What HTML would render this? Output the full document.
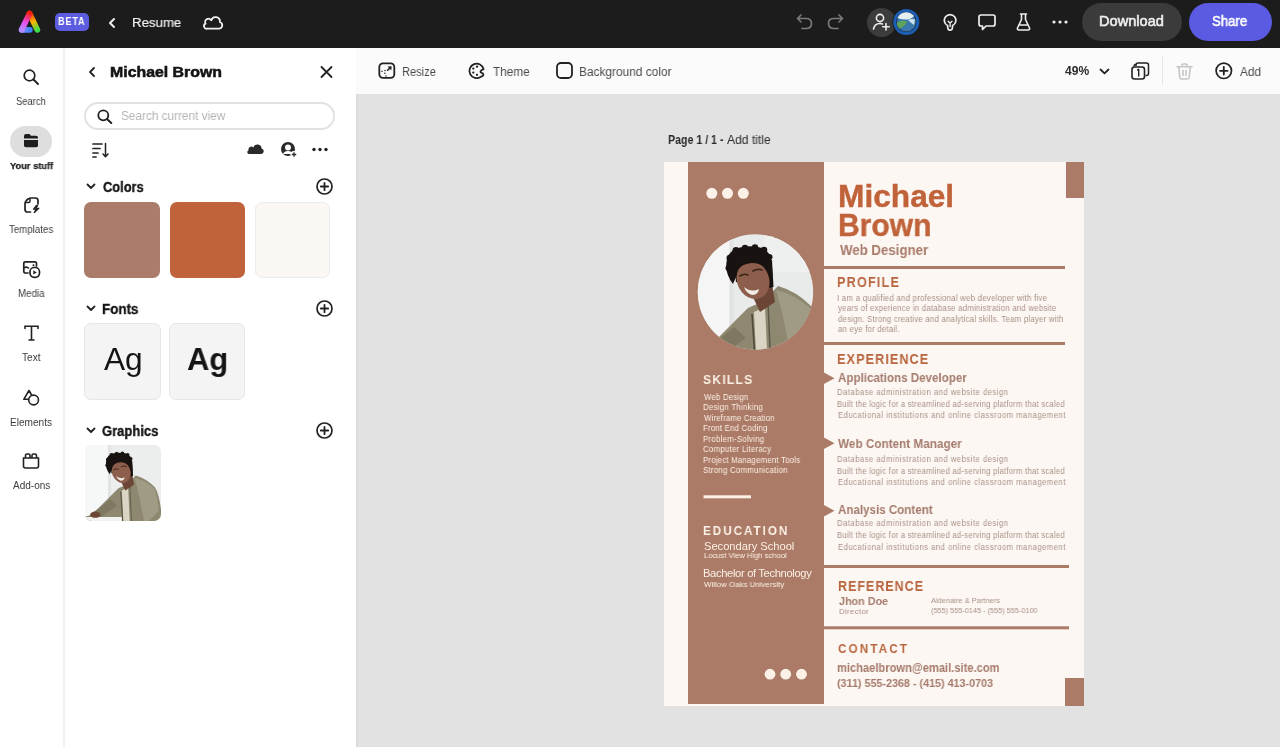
<!DOCTYPE html>
<html><head><meta charset="utf-8">
<style>
*{margin:0;padding:0;box-sizing:border-box}
html,body{width:1280px;height:747px;overflow:hidden;background:#e2e2e2;font-family:"Liberation Sans",sans-serif}
.a{position:absolute}
.t{position:absolute;white-space:nowrap;line-height:1;transform-origin:0 0;will-change:transform}
svg{position:absolute;overflow:visible}
#top{left:0;top:0;width:1280px;height:48px;background:#1c1c1c}
#rail{left:0;top:48px;width:64.5px;height:699px;background:#fff;border-right:2.5px solid #f0f0f0}
#panel{left:64.5px;top:48px;width:291.5px;height:699px;background:#fff}
#tool{left:356px;top:48px;width:924px;height:46px;background:#fbfbfb}
#canvas{left:356px;top:94px;width:924px;height:653px;background:#e2e2e2;box-shadow:inset 2px 0 2px -1px rgba(0,0,0,0.05)}
.lbl{font-size:10px;color:#444;text-align:center;width:63px;left:0}
.sw{position:absolute;top:201.8px;width:75.8px;height:76.3px;border-radius:7px}
.ft{position:absolute;top:323.2px;width:76.6px;height:77.3px;border-radius:7px;background:#f4f4f4;border:1px solid #e6e6e6}
#page{left:664px;top:162px;width:419.6px;height:544.4px;background:#fcf7f2;overflow:hidden}
.brn{color:#a97a68}
.hd{font-weight:bold;color:#b9653d;letter-spacing:2px}
.bd{color:#b69a90}
</style></head><body>
<svg style="left:0;top:0" width="0" height="0"><defs><g id="person">
      <path d="M-20 210 L38 192 Q60 170 84 146 L100 139 L114 124 Q132 129 147 144 Q158 160 160 210 Z" fill="#8d886f"/>
      <path d="M112 128 Q130 132 146 146 Q152 160 154 185 L130 210 L118 150Z" fill="#a09b84"/>
      <path d="M90 150 L101 145 L104 210 L93 210 Z" fill="#d9d4c4"/>
      <path d="M88 152 L92 210" stroke="#4e4a3c" stroke-width="1.6"/>
      <path d="M104 140 L107 210" stroke="#5a5645" stroke-width="1.4"/>
      <path d="M70 165 Q55 178 40 188 L50 198 Q66 188 82 176 Z" fill="#7d785f"/>
      <rect x="-10" y="196" width="100" height="14" fill="#f2f2f0"/>
      <ellipse cx="44" cy="192" rx="9" ry="5.5" fill="#6d4636"/>
      <path d="M88 133 L108 122 L111 140 L96 150 Z" fill="#6b4536"/>
      <path d="M70 100 L108 98 L109.5 125 L100 127 L72 120Z" fill="#181311"/><ellipse cx="89" cy="118" rx="16" ry="19.5" transform="rotate(-22 89 118)" fill="#8c5e4b"/><path d="M76 114 Q80 111 84 113 M89 109 Q94 106 98 108" fill="none" stroke="#3a2219" stroke-width="1.6" stroke-linecap="round"/>
      <path d="M69 122 Q61 112 62.5 100 Q64 88 76 85.5 Q86 83 96 85.5 Q107 89 107.5 100 Q109 112 108 123 Q105 114 103 108 Q98 101 88 101 Q78 101.5 74 108 Q72 116 69 122 Z" fill="#181311"/><g fill="#181311"><circle cx="66" cy="96" r="3.5"/><circle cx="72" cy="88.5" r="3.5"/><circle cx="81" cy="86" r="3.2"/><circle cx="91" cy="85.5" r="3.2"/><circle cx="100" cy="88" r="3.3"/><circle cx="105.5" cy="95" r="3"/><circle cx="64.5" cy="106" r="3"/></g>
      <path d="M80 125 Q87 131 95 127 Q94 133 88 133 Q82 131 80 125Z" fill="#f0ebe4"/>
</g></defs></svg>
<!-- TOP BAR -->
<div id="top" class="a">
  <svg style="left:14px;top:6.8px" width="32" height="30" viewBox="0 0 32 30">
    <defs>
      <linearGradient id="lgR" gradientUnits="userSpaceOnUse" x1="15.5" y1="6" x2="23.5" y2="23"><stop offset="0" stop-color="#f3200f"/><stop offset="0.5" stop-color="#ffb400"/><stop offset="1" stop-color="#3ee04a"/></linearGradient>
      <linearGradient id="lgL" gradientUnits="userSpaceOnUse" x1="15.5" y1="6" x2="7.5" y2="23"><stop offset="0" stop-color="#f3200f"/><stop offset="0.55" stop-color="#e84ef0"/><stop offset="1" stop-color="#b58cff"/></linearGradient>
      <linearGradient id="lgB" gradientUnits="userSpaceOnUse" x1="7.5" y1="23" x2="17" y2="23"><stop offset="0" stop-color="#a98cff"/><stop offset="0.5" stop-color="#5a88ff"/><stop offset="1" stop-color="#3e86f5"/></linearGradient>
    </defs>
    <path d="M15.5 6.6 L23.3 22.8" stroke="url(#lgR)" stroke-width="5.8" stroke-linecap="round"/>
    <path d="M7.7 22.8 L15.8 22.8" stroke="url(#lgB)" stroke-width="5.8" stroke-linecap="round"/>
    <path d="M15.5 6.6 L7.7 22.8" stroke="url(#lgL)" stroke-width="5.8" stroke-linecap="round"/>
  </svg>
  <div class="a" style="left:55px;top:13px;width:34px;height:18px;background:#5c5ce0;border-radius:5px"></div>
  <svg style="left:108px;top:18px" width="8" height="10" viewBox="0 0 8 10"><path d="M6 1 L2 5 L6 9" fill="none" stroke="#eee" stroke-width="2" stroke-linecap="round" stroke-linejoin="round"/></svg>
  <svg style="left:203px;top:14px" width="21" height="16" viewBox="0 0 21 16"><path d="M4.3 14.6 H16.3 A3.4 3.4 0 0 0 16.9 8.0 A4.4 4.4 0 0 0 8.3 6.3 A3.3 3.3 0 0 0 2.6 9.7 A2.6 2.6 0 0 0 4.3 14.6 Z" fill="none" stroke="#f0f0f0" stroke-width="1.8" stroke-linejoin="round"/></svg>

  <svg style="left:796px;top:14px" width="17" height="16" viewBox="0 0 17 16"><path d="M5 1 L1.5 4.5 L5 8 M1.5 4.5 L10 4.5 Q15.5 4.5 15.5 9.5 Q15.5 14.5 10 14.5 L6 14.5" fill="none" stroke="#7a7a7a" stroke-width="1.7" stroke-linecap="round" stroke-linejoin="round"/></svg>
  <svg style="left:827px;top:14px" width="17" height="16" viewBox="0 0 17 16"><path d="M12 1 L15.5 4.5 L12 8 M15.5 4.5 L7 4.5 Q1.5 4.5 1.5 9.5 Q1.5 14.5 7 14.5 L11 14.5" fill="none" stroke="#7a7a7a" stroke-width="1.7" stroke-linecap="round" stroke-linejoin="round"/></svg>

  <div class="a" style="left:866.5px;top:7.5px;width:29px;height:29px;border-radius:50%;background:#3c3c3c"></div>
  <svg style="left:872px;top:13px" width="18" height="18" viewBox="0 0 18 18"><circle cx="8" cy="5" r="3.6" fill="none" stroke="#eee" stroke-width="1.6"/><path d="M1.5 16 Q2.5 10.5 8 10.5 Q9.5 10.5 10.5 11" fill="none" stroke="#eee" stroke-width="1.6" stroke-linecap="round"/><path d="M14 10.5 V17 M10.8 13.7 H17.2" stroke="#eee" stroke-width="1.6" stroke-linecap="round"/></svg>
  <div class="a" style="left:893px;top:7px;width:27px;height:30px"></div>
  <svg style="left:892px;top:7px" width="29" height="29" viewBox="0 0 29 29">
    <circle cx="14.3" cy="15" r="14" fill="#1c1c1c"/>
    <circle cx="14.3" cy="15" r="11.6" fill="none" stroke="#1d5eb5" stroke-width="3"/>
    <circle cx="14.3" cy="15" r="9.6" fill="#3a78ad"/>
    <path d="M5.5 11 Q8 5.5 14 5.3 Q19 5.5 22 9 Q20 12 16 12.5 Q10 13 5.5 11Z" fill="#e4eef2"/>
    <path d="M4.8 16 Q9 12.5 15 14.5 Q13 20 7 21.5 Q5 19 4.8 16Z" fill="#5fa35a"/>
    <path d="M16 13 Q19.5 11.5 23 12.5 L22 18 Q19 16 16 13Z" fill="#cfe0ea"/>
  </svg>
  <svg style="left:943px;top:13px" width="15" height="19" viewBox="0 0 15 19"><path d="M4.6 12.6 A5.8 5.8 0 1 1 9.6 12.6 L9.4 15 Q9.2 17.2 7.1 17.2 Q5 17.2 4.8 15 Z" fill="none" stroke="#eee" stroke-width="1.7" stroke-linejoin="round"/><path d="M5.2 8.3 L7.1 10.2 L9 8.3 M7.1 10.2 V13.5" fill="none" stroke="#eee" stroke-width="1.4" stroke-linecap="round"/></svg>
  <svg style="left:978px;top:14px" width="18" height="17" viewBox="0 0 18 17"><path d="M3 1 H15 Q17 1 17 3 V10 Q17 12 15 12 H8 L4.5 15.5 V12 H3 Q1 12 1 10 V3 Q1 1 3 1Z" fill="none" stroke="#eee" stroke-width="1.7" stroke-linejoin="round"/></svg>
  <svg style="left:1016px;top:13px" width="15" height="18" viewBox="0 0 15 18"><path d="M4.5 1 H10.5 M5.5 1 V6.5 L1.5 15 Q1 17 3 17 H12 Q14 17 13.5 15 L9.5 6.5 V1 M3 12 H12" fill="none" stroke="#eee" stroke-width="1.6" stroke-linejoin="round" stroke-linecap="round"/></svg>
  <svg style="left:1052px;top:20px" width="16" height="4" viewBox="0 0 16 4"><circle cx="2" cy="2" r="1.6" fill="#eee"/><circle cx="8" cy="2" r="1.6" fill="#eee"/><circle cx="14" cy="2" r="1.6" fill="#eee"/></svg>
  <div class="a" style="left:1081.5px;top:3px;width:100.5px;height:38px;border-radius:19px;background:#3b3b3b"></div>
  <div class="a" style="left:1189px;top:3px;width:83px;height:38px;border-radius:19px;background:#5a5ae2"></div>
</div>

<!-- LEFT RAIL -->
<div id="rail" class="a">
</div>
<svg style="left:23px;top:69px" width="16" height="16" viewBox="0 0 16 16"><circle cx="6.5" cy="6.5" r="5.3" fill="none" stroke="#222" stroke-width="1.7"/><path d="M10.5 10.5 L15 15" stroke="#222" stroke-width="1.9" stroke-linecap="round"/></svg>
<div class="a" style="left:10px;top:125.7px;width:42.2px;height:31px;border-radius:15.5px;background:#dedede"></div>
<svg style="left:23px;top:133px" width="16" height="15" viewBox="0 0 16 15"><path d="M1 3 Q1 1 3 1 H6.5 L8 2.8 H13 Q15 2.8 15 4.8 V5.5 H1 Z" fill="#1e1e1e"/><path d="M1 7 H15 V12.5 Q15 14.2 13.2 14.2 H2.8 Q1 14.2 1 12.5 Z" fill="#1e1e1e"/></svg>
<svg style="left:23px;top:197px" width="18" height="17" viewBox="0 0 18 17"><path d="M7.5 15 H4.5 Q2 15 2 12.5 V6.5 Q2 4.5 3.5 3.3 L5.5 1.8 Q6.5 1 8 1 H12.5 Q15 1 15 3.5 V7" fill="none" stroke="#222" stroke-width="1.7" stroke-linejoin="round" stroke-linecap="round"/><path d="M2.5 5.5 H5.5 Q7 5.5 7 4 V1.3" fill="none" stroke="#222" stroke-width="1.5"/><path d="M13.5 8.5 L10.5 12.2 H13.2 L11.3 15.6 L15.8 11.3 H13 L14.5 8.5Z" fill="none" stroke="#222" stroke-width="1.3" stroke-linejoin="round"/></svg>
<svg style="left:22px;top:260px" width="19" height="19" viewBox="0 0 19 19"><path d="M6 13 H3.5 Q1.8 13 1.8 11.2 V3.5 Q1.8 1.8 3.5 1.8 H12.8 Q14.5 1.8 14.5 3.5 V6" fill="none" stroke="#222" stroke-width="1.7" stroke-linecap="round"/><path d="M1.8 8 Q4.5 6 7 8.5" fill="none" stroke="#222" stroke-width="1.5"/><circle cx="11.5" cy="5.2" r="1" fill="#222"/><rect x="8" y="7.5" width="9.5" height="9.8" rx="4.2" fill="#fff" stroke="#222" stroke-width="1.7"/><path d="M11.3 10.2 L14.8 12.4 L11.3 14.6Z" fill="#222"/></svg>
<svg style="left:24px;top:325px" width="15" height="16" viewBox="0 0 15 16"><path d="M1 3.5 V1.2 H14 V3.5 M7.5 1.2 V15 M5 15 H10" fill="none" stroke="#222" stroke-width="1.6" stroke-linecap="round"/></svg>
<svg style="left:22px;top:389px" width="18" height="18" viewBox="0 0 18 18"><path d="M7 1.5 L1.8 10.3 H12.2 Z" fill="none" stroke="#222" stroke-width="1.6" stroke-linejoin="round"/><circle cx="11.6" cy="11" r="4.9" fill="#fff" stroke="#222" stroke-width="1.6"/></svg>
<svg style="left:22px;top:453px" width="18" height="16" viewBox="0 0 18 16"><path d="M1.5 5 H16.5 V13 Q16.5 15 14.5 15 H3.5 Q1.5 15 1.5 13 Z" fill="none" stroke="#222" stroke-width="1.6"/><path d="M3.5 5 V2.5 Q3.5 1 5 1 H6.5 Q8 1 8 2.5 V5 M10 5 V2.5 Q10 1 11.5 1 H13 Q14.5 1 14.5 2.5 V5" fill="none" stroke="#222" stroke-width="1.6"/></svg>

<div id="panel" class="a"></div>
<svg style="left:88px;top:67px" width="8" height="10" viewBox="0 0 8 10"><path d="M6 1 L2 5 L6 9" fill="none" stroke="#222" stroke-width="1.8" stroke-linecap="round" stroke-linejoin="round"/></svg>
<svg style="left:320px;top:66px" width="13" height="12" viewBox="0 0 13 12"><path d="M1.5 1 L11.5 11 M11.5 1 L1.5 11" stroke="#222" stroke-width="1.8" stroke-linecap="round"/></svg>
<div class="a" style="left:84px;top:101.8px;width:250.5px;height:28.2px;border-radius:14.1px;border:2px solid #e2e2e2;background:#fff"></div>
<svg style="left:97px;top:109px" width="16" height="15" viewBox="0 0 16 15"><circle cx="6.3" cy="6.3" r="5" fill="none" stroke="#222" stroke-width="1.8"/><path d="M10.2 10.2 L14.3 14" stroke="#222" stroke-width="2" stroke-linecap="round"/></svg>
<svg style="left:92px;top:142px" width="17" height="16" viewBox="0 0 17 16"><path d="M1 2 H10 M1 6.5 H8 M1 11 H6 M1 15 H4" stroke="#222" stroke-width="1.7" stroke-linecap="round"/><path d="M13.5 1.5 V14.5 M11 12 L13.5 14.8 L16 12" fill="none" stroke="#222" stroke-width="1.5" stroke-linecap="round" stroke-linejoin="round"/></svg>
<svg style="left:246px;top:142px" width="19" height="13" viewBox="0 0 19 13"><path d="M3.3 12 H15.2 A2.8 2.8 0 0 0 15.6 6.5 A4.2 4.2 0 0 0 7.4 5.4 A2.9 2.9 0 0 0 2.6 8.3 A1.9 1.9 0 0 0 3.3 12 Z" fill="#2a2a2a"/></svg>
<svg style="left:280px;top:141px" width="18" height="17" viewBox="0 0 18 17"><circle cx="8" cy="8" r="7" fill="#2a2a2a"/><circle cx="8" cy="6.5" r="3" fill="#fff"/><path d="M3 13 Q4 10 8 10 Q12 10 13 13 Z" fill="#fff"/><circle cx="14" cy="13.5" r="3.6" fill="#fff"/><path d="M14 11.3 V15.7 M11.8 13.5 H16.2" stroke="#2a2a2a" stroke-width="1.3"/></svg>
<svg style="left:312px;top:147px" width="16" height="5" viewBox="0 0 16 5"><circle cx="2" cy="2.5" r="1.7" fill="#222"/><circle cx="8" cy="2.5" r="1.7" fill="#222"/><circle cx="14" cy="2.5" r="1.7" fill="#222"/></svg>

<svg style="left:86px;top:183px" width="10" height="7" viewBox="0 0 10 7"><path d="M1.5 1.5 L5 5 L8.5 1.5" fill="none" stroke="#222" stroke-width="1.8" stroke-linecap="round" stroke-linejoin="round"/></svg>
<svg style="left:316px;top:178px" width="18" height="18" viewBox="0 0 18 18"><circle cx="8.5" cy="8.5" r="7.5" fill="none" stroke="#222" stroke-width="1.7"/><path d="M8.5 4.8 V12.2 M4.8 8.5 H12.2" stroke="#222" stroke-width="1.8" stroke-linecap="round"/></svg>
<div class="sw" style="left:84.4px;background:#ab7c69"></div>
<div class="sw" style="left:169.6px;background:#c0623a"></div>
<div class="sw" style="left:254.5px;background:#fbf7f2;border:1px solid #ececec"></div>

<svg style="left:86px;top:305px" width="10" height="7" viewBox="0 0 10 7"><path d="M1.5 1.5 L5 5 L8.5 1.5" fill="none" stroke="#222" stroke-width="1.8" stroke-linecap="round" stroke-linejoin="round"/></svg>
<svg style="left:316px;top:300px" width="18" height="18" viewBox="0 0 18 18"><circle cx="8.5" cy="8.5" r="7.5" fill="none" stroke="#222" stroke-width="1.7"/><path d="M8.5 4.8 V12.2 M4.8 8.5 H12.2" stroke="#222" stroke-width="1.8" stroke-linecap="round"/></svg>
<div class="ft" style="left:84.4px"></div>
<div class="ft" style="left:168.8px"></div>

<svg style="left:86px;top:427px" width="10" height="7" viewBox="0 0 10 7"><path d="M1.5 1.5 L5 5 L8.5 1.5" fill="none" stroke="#222" stroke-width="1.8" stroke-linecap="round" stroke-linejoin="round"/></svg>
<svg style="left:316px;top:422px" width="18" height="18" viewBox="0 0 18 18"><circle cx="8.5" cy="8.5" r="7.5" fill="none" stroke="#222" stroke-width="1.7"/><path d="M8.5 4.8 V12.2 M4.8 8.5 H12.2" stroke="#222" stroke-width="1.8" stroke-linecap="round"/></svg>
<div class="a" style="left:84.6px;top:445.2px;width:76px;height:76px;border-radius:7px;overflow:hidden;background:#eceeee">
  <svg style="left:0;top:0" width="76" height="76" viewBox="0 0 76 76">
    <rect width="76" height="76" fill="#eceeee"/>
    <rect x="0" y="0" width="23" height="76" fill="#f6f7f7"/>
    <rect x="23" y="0" width="3" height="76" fill="#e2e4e4"/>
    <g transform="translate(-15 -40.9) scale(0.576)"><use href="#person"/></g>
  </svg>
</div>

<div id="tool" class="a"></div>
<svg style="left:377.5px;top:62px" width="18" height="17" viewBox="0 0 18 17"><rect x="1.3" y="1.3" width="15" height="14.6" rx="3.6" fill="none" stroke="#222" stroke-width="1.8"/><path d="M13.6 4.2 L13.4 8.3 L9.5 4.4Z" fill="#222"/><path d="M12.3 5.6 L9.6 8.3" stroke="#222" stroke-width="1.6" stroke-linecap="round"/><g fill="#222"><circle cx="4" cy="9.3" r="0.75"/><circle cx="7" cy="8.4" r="0.75"/><circle cx="6.8" cy="11.3" r="0.75"/><circle cx="8" cy="14" r="0.75"/></g></svg>
<svg style="left:468px;top:62px" width="18" height="18" viewBox="0 0 18 18"><path d="M15.6 7.2 A7.2 7.2 0 1 0 12.6 14.9 Q15.6 13.8 15.4 12.3 Q15.2 11.1 13.6 10.8 Q12.2 10.4 12.6 9.2 Q13.1 8.2 15.6 7.2 Z" fill="none" stroke="#222" stroke-width="1.8" stroke-linejoin="round"/><g fill="#222"><circle cx="5.3" cy="6.6" r="1.15"/><circle cx="9" cy="4.7" r="1.15"/><circle cx="5.3" cy="10.6" r="1.15"/><circle cx="9" cy="12.8" r="1.15"/></g></svg>
<svg style="left:556px;top:62px" width="17" height="17" viewBox="0 0 17 17"><rect x="1" y="1" width="15" height="15" rx="4" fill="none" stroke="#222" stroke-width="1.8"/></svg>
<svg style="left:1099px;top:68px" width="11" height="7" viewBox="0 0 11 7"><path d="M1.5 1.5 L5.5 5.3 L9.5 1.5" fill="none" stroke="#222" stroke-width="1.8" stroke-linecap="round" stroke-linejoin="round"/></svg>
<svg style="left:1131px;top:62px" width="19" height="18" viewBox="0 0 19 18"><path d="M5 4 V3 Q5 1 7 1 H15.5 Q17.5 1 17.5 3 V11.5 Q17.5 13.5 15.5 13.5 H14.5" fill="none" stroke="#222" stroke-width="1.5"/><path d="M3 4.5 V4 Q3 2.5 5 2.5" fill="none" stroke="#222" stroke-width="1.3"/><rect x="1" y="5" width="12.5" height="12" rx="2.5" fill="#fbfbfb" stroke="#222" stroke-width="1.6"/><path d="M6.2 8.3 L7.7 7.3 V14.5" fill="none" stroke="#222" stroke-width="1.4" stroke-linejoin="round"/></svg>
<div class="a" style="left:1162px;top:56px;width:1px;height:29px;background:#e6e6e6"></div>
<svg style="left:1176px;top:63px" width="17" height="17" viewBox="0 0 17 17"><path d="M1 3.8 H16 M6 3.5 V2.2 Q6 1 7.2 1 H9.8 Q11 1 11 2.2 V3.5 M2.8 4 L3.8 14.5 Q4 16 5.5 16 H11.5 Q13 16 13.2 14.5 L14.2 4 M7 7.5 V12.5 M10 7.5 V12.5" fill="none" stroke="#c6c6c6" stroke-width="1.6" stroke-linecap="round"/></svg>
<svg style="left:1215px;top:62px" width="18" height="18" viewBox="0 0 18 18"><circle cx="8.8" cy="8.8" r="7.7" fill="none" stroke="#222" stroke-width="1.7"/><path d="M8.8 5 V12.6 M5 8.8 H12.6" stroke="#222" stroke-width="1.8" stroke-linecap="round"/></svg>

<div id="canvas" class="a"></div>
<div id="page" class="a">
  <div class="a" style="left:23.6px;top:0;width:136.4px;height:542.3px;background:#ab7b67"></div>
  <div class="a" style="left:402px;top:0;width:17.6px;height:35.5px;background:#ab7b67"></div>
  <div class="a" style="left:401.2px;top:516px;width:19px;height:28px;background:#ab7b67"></div>
  <svg style="left:0;top:0" width="420" height="544" viewBox="0 0 420 544">
    <g fill="#fcf1e6">
      <circle cx="47.8" cy="31.3" r="5.5"/><circle cx="63.5" cy="31.3" r="5.5"/><circle cx="79.3" cy="31.3" r="5.5"/>
      <circle cx="106" cy="512.2" r="5.4"/><circle cx="121.7" cy="512.2" r="5.4"/><circle cx="137.5" cy="512.2" r="5.4"/>
    </g>
    <g fill="#ab7b67">
      <rect x="160" y="104" width="241" height="3"/>
      <rect x="160" y="180" width="241" height="3"/>
      <rect x="160" y="403" width="245" height="3"/>
      <rect x="160" y="464.3" width="245" height="3"/>
      <path d="M159 210 L170.5 216.3 L159 222.6Z"/>
      <path d="M159 275 L170.5 281.3 L159 287.6Z"/>
      <path d="M159 342.5 L170.5 348.8 L159 355.1Z"/>
    </g>
    <rect x="39.5" y="333.3" width="47.5" height="3" fill="#fcf1e6"/>
    <defs><clipPath id="pc"><circle cx="91.5" cy="130" r="57.7"/></clipPath></defs>
    <g clip-path="url(#pc)">
      <rect x="30" y="70" width="125" height="125" fill="#e9eaea"/>
      <rect x="100" y="70" width="55" height="40" fill="#eeefef"/>
      <rect x="30" y="70" width="35.5" height="125" fill="#f5f5f5"/>
      <rect x="65.5" y="70" width="4" height="125" fill="#e1e3e3"/>
      <use href="#person"/>
    </g>
  </svg>
</div>

<!-- TEXT -->
<div class="t" style="left:58.33px;top:16.20px;font-size:11.337px;color:#ffffff;transform:scaleX(0.8000);letter-spacing:1.097px;font-weight:bold">BETA</div>
<div class="t" style="left:132.35px;top:15.68px;font-size:13.372px;color:#f0f0f0;transform:scaleX(0.9896);-webkit-text-stroke:0.2px #f0f0f0">Resume</div>
<div class="t" style="left:1099.13px;top:14.00px;font-size:14.535px;color:#ededed;transform:scaleX(1.0048);-webkit-text-stroke:0.6px #ededed">Download</div>
<div class="t" style="left:1212.30px;top:14.00px;font-size:14.535px;color:#ffffff;transform:scaleX(0.9067);-webkit-text-stroke:0.6px #ffffff">Share</div>
<div class="t" style="left:16.23px;top:96.51px;font-size:10.029px;color:#3c3c3c;transform:scaleX(0.9359)">Search</div>
<div class="t" style="left:9.64px;top:160.50px;font-size:9.448px;color:#161616;transform:scaleX(0.9847);font-weight:bold;-webkit-text-stroke:0.25px #161616">Your stuff</div>
<div class="t" style="left:9.34px;top:224.51px;font-size:10.029px;color:#3c3c3c;transform:scaleX(0.9675)">Templates</div>
<div class="t" style="left:17.59px;top:288.51px;font-size:10.029px;color:#3c3c3c;transform:scaleX(0.9736)">Media</div>
<div class="t" style="left:21.63px;top:353.11px;font-size:10.029px;color:#3c3c3c;transform:scaleX(1.0128)">Text</div>
<div class="t" style="left:10.16px;top:417.51px;font-size:10.029px;color:#3c3c3c;transform:scaleX(1.0082)">Elements</div>
<div class="t" style="left:12.70px;top:481.11px;font-size:10.029px;color:#3c3c3c;transform:scaleX(0.9973)">Add-ons</div>
<div class="t" style="left:109.93px;top:64.55px;font-size:14.826px;color:#141414;transform:scaleX(1.0714);font-weight:bold;-webkit-text-stroke:0.55px #141414">Michael Brown</div>
<div class="t" style="left:120.77px;top:110.42px;font-size:12.500px;color:#b4b4b4;transform:scaleX(0.9432)">Search current view</div>
<div class="t" style="left:102.72px;top:179.57px;font-size:14.680px;color:#141414;transform:scaleX(0.8768);font-weight:bold;-webkit-text-stroke:0.35px #141414">Colors</div>
<div class="t" style="left:102.19px;top:301.57px;font-size:14.680px;color:#141414;transform:scaleX(0.9104);font-weight:bold;-webkit-text-stroke:0.35px #141414">Fonts</div>
<div class="t" style="left:102.41px;top:424.47px;font-size:14.680px;color:#141414;transform:scaleX(0.8856);font-weight:bold;-webkit-text-stroke:0.35px #141414">Graphics</div>
<div class="t" style="left:103.83px;top:344.18px;font-size:31.686px;color:#141414;transform:scaleX(0.9973)">Ag</div>
<div class="t" style="left:187.18px;top:344.18px;font-size:31.686px;color:#141414;transform:scaleX(0.9788);font-weight:bold">Ag</div>
<div class="t" style="left:401.65px;top:64.93px;font-size:13.081px;color:#4b4b4b;transform:scaleX(0.8452)">Resize</div>
<div class="t" style="left:492.50px;top:64.93px;font-size:13.081px;color:#4b4b4b;transform:scaleX(0.9013)">Theme</div>
<div class="t" style="left:579.09px;top:64.93px;font-size:13.081px;color:#4b4b4b;transform:scaleX(0.9085)">Background color</div>
<div class="t" style="left:1064.53px;top:65.19px;font-size:12.064px;color:#2c2c2c;transform:scaleX(0.9972);font-weight:bold">49%</div>
<div class="t" style="left:1239.85px;top:64.63px;font-size:13.081px;color:#4b4b4b;transform:scaleX(0.9023)">Add</div>
<div class="t" style="left:668.28px;top:134.04px;font-size:12.355px;color:#2c2c2c;transform:scaleX(0.8596);font-weight:bold">Page 1 / 1 -</div>
<div class="t" style="left:726.90px;top:134.04px;font-size:12.355px;color:#2c2c2c;transform:scaleX(0.9795)">Add title</div>
<div class="t" style="left:837.63px;top:180.68px;font-size:31.686px;color:#c0623a;transform:scaleX(0.9997);font-weight:bold;-webkit-text-stroke:0.4px #c0623a">Michael</div>
<div class="t" style="left:837.75px;top:209.58px;font-size:31.686px;color:#c0623a;transform:scaleX(0.9481);font-weight:bold;-webkit-text-stroke:0.4px #c0623a">Brown</div>
<div class="t" style="left:839.60px;top:242.65px;font-size:14.826px;color:#a87b6b;transform:scaleX(0.8949);font-weight:bold">Web Designer</div>
<div class="t" style="left:837.14px;top:275.37px;font-size:14.680px;color:#b8663f;transform:scaleX(0.8600);letter-spacing:1.391px;font-weight:bold">PROFILE</div>
<div class="t" style="left:837.25px;top:294.32px;font-size:8.721px;color:#a98f88;transform:scaleX(0.9000);letter-spacing:0.262px">I am a qualified and professional web developer with five</div>
<div class="t" style="left:838.00px;top:304.22px;font-size:8.721px;color:#a98f88;transform:scaleX(0.9000);letter-spacing:0.233px">years of experience in database administration and website</div>
<div class="t" style="left:837.70px;top:314.52px;font-size:8.721px;color:#a98f88;transform:scaleX(0.9000);letter-spacing:0.227px">design. Strong creative and analytical skills. Team player with</div>
<div class="t" style="left:837.70px;top:324.82px;font-size:8.721px;color:#a98f88;transform:scaleX(0.9000);letter-spacing:0.229px">an eye for detail.</div>
<div class="t" style="left:837.14px;top:351.65px;font-size:14.826px;color:#b8663f;transform:scaleX(0.8600);letter-spacing:1.183px;font-weight:bold">EXPERIENCE</div>
<div class="t" style="left:837.70px;top:370.93px;font-size:13.081px;color:#a57b6d;transform:scaleX(0.8865);font-weight:bold">Applications Developer</div>
<div class="t" style="left:838.00px;top:437.33px;font-size:13.081px;color:#a57b6d;transform:scaleX(0.8978);font-weight:bold">Web Content Manager</div>
<div class="t" style="left:838.30px;top:503.43px;font-size:13.081px;color:#a57b6d;transform:scaleX(0.8859);font-weight:bold">Analysis Content</div>
<div class="t" style="left:837.74px;top:578.70px;font-size:14.535px;color:#b8663f;transform:scaleX(0.8600);letter-spacing:1.166px;font-weight:bold">REFERENCE</div>
<div class="t" style="left:839.44px;top:596.25px;font-size:11.047px;color:#a57b6d;transform:scaleX(0.9773);font-weight:bold">Jhon Doe</div>
<div class="t" style="left:839.33px;top:607.53px;font-size:7.994px;color:#a98f88;letter-spacing:0.262px">Director</div>
<div class="t" style="left:931.20px;top:596.83px;font-size:7.994px;color:#a98f88;transform:scaleX(0.9361)">Aldenaire &amp; Partners</div>
<div class="t" style="left:930.54px;top:607.23px;font-size:7.994px;color:#a98f88;transform:scaleX(0.9164)">(555) 555-0145 - (555) 555-0100</div>
<div class="t" style="left:838.16px;top:642.10px;font-size:13.227px;color:#b8663f;transform:scaleX(0.8800);letter-spacing:2.436px;font-weight:bold">CONTACT</div>
<div class="t" style="left:837.23px;top:661.69px;font-size:12.064px;color:#a67a6b;transform:scaleX(0.9244);font-weight:bold">michaelbrown@email.site.com</div>
<div class="t" style="left:836.84px;top:676.76px;font-size:11.628px;color:#a67a6b;transform:scaleX(0.9262);font-weight:bold">(311) 555-2368 - (415) 413-0703</div>
<div class="t" style="left:703.05px;top:373.26px;font-size:13.517px;color:#fbf0e5;transform:scaleX(0.9000);letter-spacing:1.333px;font-weight:bold">SKILLS</div>
<div class="t" style="left:703.25px;top:524.43px;font-size:13.081px;color:#fbf0e5;transform:scaleX(0.9000);letter-spacing:2.111px;font-weight:bold">EDUCATION</div>
<div class="t" style="left:703.50px;top:540.53px;font-size:11.192px;color:#fbf0e5;letter-spacing:-0.033px">Secondary School</div>
<div class="t" style="left:703.87px;top:552.23px;font-size:7.994px;color:#fbf0e5;transform:scaleX(0.9518)">Locust View High school</div>
<div class="t" style="left:703.00px;top:567.93px;font-size:11.192px;color:#fbf0e5;letter-spacing:-0.348px">Bachelor of Technology</div>
<div class="t" style="left:704.00px;top:580.83px;font-size:7.994px;color:#fbf0e5;transform:scaleX(0.9881)">Willow Oaks University</div>
<div class="t" style="left:837.40px;top:388.06px;font-size:8.430px;color:#a98f88;transform:scaleX(0.9000);letter-spacing:0.603px">Database administration and website design</div>
<div class="t" style="left:837.40px;top:399.86px;font-size:8.430px;color:#a98f88;transform:scaleX(0.9000);letter-spacing:0.316px">Built the logic for a streamlined ad-serving platform that scaled</div>
<div class="t" style="left:838.00px;top:411.46px;font-size:8.430px;color:#a98f88;transform:scaleX(0.9000);letter-spacing:0.600px">Educational institutions and online classroom management</div>
<div class="t" style="left:837.40px;top:454.76px;font-size:8.430px;color:#a98f88;transform:scaleX(0.9000);letter-spacing:0.603px">Database administration and website design</div>
<div class="t" style="left:837.40px;top:466.76px;font-size:8.430px;color:#a98f88;transform:scaleX(0.9000);letter-spacing:0.316px">Built the logic for a streamlined ad-serving platform that scaled</div>
<div class="t" style="left:838.00px;top:478.36px;font-size:8.430px;color:#a98f88;transform:scaleX(0.9000);letter-spacing:0.600px">Educational institutions and online classroom management</div>
<div class="t" style="left:837.40px;top:519.06px;font-size:8.430px;color:#a98f88;transform:scaleX(0.9000);letter-spacing:0.603px">Database administration and website design</div>
<div class="t" style="left:837.40px;top:531.06px;font-size:8.430px;color:#a98f88;transform:scaleX(0.9000);letter-spacing:0.316px">Built the logic for a streamlined ad-serving platform that scaled</div>
<div class="t" style="left:838.00px;top:542.76px;font-size:8.430px;color:#a98f88;transform:scaleX(0.9000);letter-spacing:0.600px">Educational institutions and online classroom management</div>
<div class="t" style="left:703.50px;top:392.52px;font-size:8.721px;color:#fbf0e5;transform:scaleX(0.9000);letter-spacing:0.191px">Web Design</div>
<div class="t" style="left:702.90px;top:403.22px;font-size:8.721px;color:#fbf0e5;transform:scaleX(0.9000);letter-spacing:0.290px">Design Thinking</div>
<div class="t" style="left:703.50px;top:413.52px;font-size:8.721px;color:#fbf0e5;transform:scaleX(0.9000);letter-spacing:0.157px">Wireframe Creation</div>
<div class="t" style="left:702.90px;top:424.22px;font-size:8.721px;color:#fbf0e5;transform:scaleX(0.9000);letter-spacing:0.211px">Front End Coding</div>
<div class="t" style="left:702.90px;top:434.62px;font-size:8.721px;color:#fbf0e5;transform:scaleX(0.9000);letter-spacing:0.286px">Problem-Solving</div>
<div class="t" style="left:703.05px;top:445.42px;font-size:8.721px;color:#fbf0e5;transform:scaleX(0.9000);letter-spacing:0.271px">Computer Literacy</div>
<div class="t" style="left:702.90px;top:455.62px;font-size:8.721px;color:#fbf0e5;transform:scaleX(0.9000);letter-spacing:0.208px">Project Management Tools</div>
<div class="t" style="left:703.05px;top:466.02px;font-size:8.721px;color:#fbf0e5;transform:scaleX(0.9000);letter-spacing:0.275px">Strong Communication</div>
</body></html>
